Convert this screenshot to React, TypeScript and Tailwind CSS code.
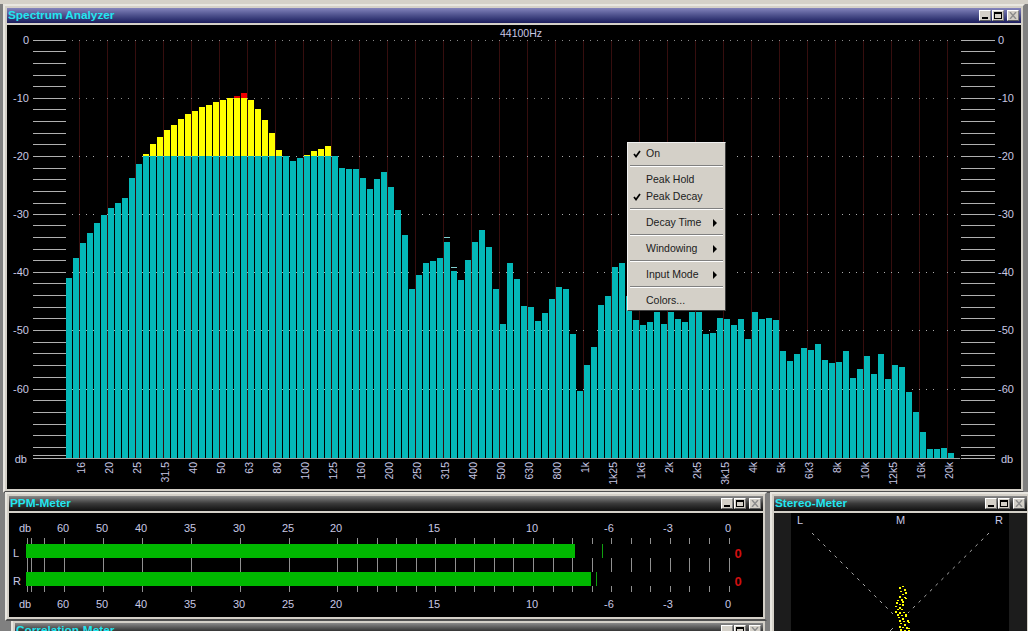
import React from 'react';

// top y of each spectrum bar, 66 + 7 * i on the x axis
const bars = [
  278, 258, 243, 233, 223, 215, 208, 203, 198, 178, 164, 156, 156, 156, 156, 156, 156, 156, 156, 156,
  156, 156, 156, 156, 156, 156, 156, 156, 156, 156, 156, 156, 161, 158, 156, 156, 156, 156, 156, 168,
  169, 169, 178, 189, 179, 172, 187, 210, 235, 289, 275, 263, 261, 258, 242, 271, 280, 260, 242, 230,
  247, 289, 324, 263, 279, 306, 307, 321, 313, 299, 287, 289, 334, 391, 365, 347, 305, 296, 267, 263,
  296, 320, 325, 322, 312, 324, 312, 319, 322, 312, 312, 334, 333, 318, 319, 325, 319, 339, 312,
  319, 318, 320, 351, 361, 354, 348, 350, 344, 360, 363, 362, 351, 378, 369, 356, 374, 354, 379, 365,
  367, 392, 412, 432, 449, 449, 448, 453,
];

const yellow: Record<number, number> = {
  11: 154, 12: 144, 13: 137, 14: 130, 15: 125, 16: 119, 17: 114, 18: 111, 19: 107, 20: 105, 21: 102, 22: 100,
  23: 98, 24: 98, 25: 98, 26: 100, 27: 109, 28: 120, 29: 133, 30: 150, 34: 155, 35: 151, 36: 149, 37: 146,
};

const freqLabels = [
  '16', '20', '25', '31.5', '40', '50', '63', '80', '100', '125', '160', '200', '250', '315', '400', '500',
  '630', '800', '1k', '1k25', '1k6', '2k', '2k5', '3k15', '4k', '5k', '6k3', '8k', '10k', '12k5', '16k', '20k',
];

const dbLabels = [
  { y: 40, t: '0' }, { y: 98, t: '-10' }, { y: 156, t: '-20' }, { y: 214, t: '-30' },
  { y: 272, t: '-40' }, { y: 330, t: '-50' }, { y: 389, t: '-60' }, { y: 459, t: 'db' },
];
const ticks = [40, 51, 63, 75, 86, 98, 109, 121, 133, 144, 156, 168, 179, 191, 203, 214, 225, 237, 249, 260, 272, 283, 295, 307, 318, 330, 342, 353, 365, 377, 389, 400, 412, 424, 435, 447, 455, 458];

const ppmLabels = [
  { x: 25, t: 'db' }, { x: 63, t: '60' }, { x: 102, t: '50' }, { x: 141, t: '40' }, { x: 190, t: '35' },
  { x: 239, t: '30' }, { x: 288, t: '25' }, { x: 336, t: '20' }, { x: 434, t: '15' }, { x: 532, t: '10' },
  { x: 609, t: '-6' }, { x: 668, t: '-3' }, { x: 728, t: '0' },
];
const ppmTicks = [27, 31, 44, 64, 103, 142, 191, 240, 289, 337, 357, 377, 396, 416, 435, 455, 474, 494, 513, 533, 553, 572, 592, 611, 631, 650, 670, 689, 709, 729];

const stereoDots = [
  [899, 587], [902, 586], [904, 589], [900, 591], [905, 592], [902, 594], [899, 596], [904, 597], [901, 599],
  [897, 600], [902, 601], [905, 598], [896, 602], [899, 604], [902, 604], [895, 606], [899, 607], [897, 609],
  [895, 611], [901, 609], [899, 612], [903, 612], [897, 614], [901, 615], [905, 614], [898, 617], [902, 618],
  [905, 616], [899, 620], [903, 621], [907, 620], [900, 623], [904, 624], [908, 622], [899, 626], [902, 627],
  [906, 627], [908, 628], [900, 629], [904, 630], [908, 630],
];

function WinButtons() {
  const btn = 'w-[12px] h-[11px] bg-[#d4d0c8] border border-t-white border-l-white border-r-[#808080] border-b-[#606060] flex items-center justify-center';
  return (
    <div className="flex gap-[1px] items-center">
      <div className={btn}><div className="w-[6px] h-[2px] bg-black mt-[5px] mr-[1px]" /></div>
      <div className={btn + ' mr-[2px]'}><div className="w-[8px] h-[7px] border border-black border-t-2" /></div>
      <div className={btn}>
        <svg width="8" height="7" viewBox="0 0 8 7" stroke="#8c8c8c" strokeWidth="1.4">
          <path d="M1 0 L7 7 M7 0 L1 7" />
        </svg>
      </div>
    </div>
  );
}

function Window({ left, top, width, height, title, active, children }: {
  left: number; top: number; width: number; height: number; title: string; active?: boolean; children?: React.ReactNode;
}) {
  return (
    <div
      className="absolute flex flex-col bg-[#d4d0c8] border-2 border-t-[#e8e6e0] border-l-[#e8e6e0] border-r-[#808080] border-b-[#505050] p-[2px]"
      style={{ left, top, width, height }}
    >
      <div
        className={
          'h-[15px] shrink-0 flex items-center justify-between pl-[1px] pr-[2px] bg-gradient-to-b ' +
          (active ? 'from-[#8484bc] to-[#1c1c5c]' : 'from-[#8a8a8a] via-[#3a3a3a] to-[#101010]')
        }
      >
        <span className="text-[11.8px] font-bold text-[#22e6f0] leading-none whitespace-nowrap">{title}</span>
        <WinButtons />
      </div>
      <div className="h-[2px] shrink-0" />
      <div className="relative flex-1 bg-black overflow-hidden">{children}</div>
    </div>
  );
}

function MenuItem({ label, checked, arrow }: { label: string; checked?: boolean; arrow?: boolean }) {
  return (
    <div className="relative h-[17px] flex items-center pl-[18px] pr-[8px] text-[10.5px] text-[#202020]">
      {checked && (
        <svg className="absolute left-[5px] top-[5px]" width="8" height="8" viewBox="0 0 8 8" fill="none" stroke="#000" strokeWidth="1.7">
          <path d="M1 4 L3 6.5 L7 1" />
        </svg>
      )}
      <span className="flex-1">{label}</span>
      {arrow && <div className="w-0 h-0 border-y-[4px] border-y-transparent border-l-[4px] border-l-black" />}
    </div>
  );
}

function MenuSep() {
  return <div className="mx-[2px] mt-[3px] mb-[4px] h-[2px] border-t border-t-[#808080] border-b border-b-white" />;
}

function ContextMenu() {
  return (
    <div className="absolute left-[627px] top-[142px] w-[99px] h-[169px] bg-[#d4d0c8] border border-t-[#f0f0f0] border-l-[#f0f0f0] border-r-[#404040] border-b-[#404040] py-[2px]">
      <MenuItem label="On" checked />
      <MenuSep />
      <MenuItem label="Peak Hold" />
      <MenuItem label="Peak Decay" checked />
      <MenuSep />
      <MenuItem label="Decay Time" arrow />
      <MenuSep />
      <MenuItem label="Windowing" arrow />
      <MenuSep />
      <MenuItem label="Input Mode" arrow />
      <MenuSep />
      <MenuItem label="Colors..." />
    </div>
  );
}

// chart drawing uses page coordinates through the viewBox
function SpectrumChart() {
  const gridY = [40, 98, 156, 214, 272, 330, 389];
  const gridX = Array.from({ length: 32 }, (_, i) => 79 + i * 28);
  const label = '#c8c8e4';
  return (
    <svg className="block" width="1014" height="465" viewBox="7 25 1014 465" fontFamily="'Liberation Sans', sans-serif" fontSize="10.5">
      {gridX.map((x) => <line key={x} x1={x + 0.5} x2={x + 0.5} y1="40" y2="458" stroke="#360e0e" />)}
      {gridY.map((y, i) => (
        <line key={y} x1="72" x2="955" y1={y + 0.5} y2={y + 0.5} stroke="#8a8a8a" strokeDasharray={i === 0 ? '1 6' : '1 6 1 6 1 6 1 13'} />
      ))}
      {ticks.map((y) => (
        <g key={y} stroke="#b0b0b0">
          <line x1="33" x2="66" y1={y + 0.5} y2={y + 0.5} />
          <line x1="961" x2="995" y1={y + 0.5} y2={y + 0.5} />
        </g>
      ))}
      <line x1="66" x2="960" y1="458.5" y2="458.5" stroke="#a0a0a0" />
      {bars.map((top, i) => (
        <rect key={i} x={66 + i * 7} y={top} width="6" height={458 - top} fill="#04b8b8" />
      ))}
      {Object.entries(yellow).map(([i, top]) => (
        <rect key={i} x={66 + Number(i) * 7} y={top} width="6" height={156 - top} fill="#ffff00" />
      ))}
      <rect x="234" y="96" width="6" height="2" fill="#e00000" />
      <rect x="241" y="93" width="6" height="5" fill="#f00000" />
      <rect x="444" y="237" width="6" height="1" fill="#80d0d0" />
      <rect x="451" y="267" width="6" height="1" fill="#80d0d0" />
      {gridY.slice(2).map((y) => (
        <line key={y} x1="72" x2="955" y1={y + 0.5} y2={y + 0.5} stroke="#ffffff" strokeOpacity="0.3" strokeDasharray="1 6 1 6 1 6 1 13" />
      ))}
      {dbLabels.map((d) => (
        <g key={d.t} fill={label} fontSize="11">
          <text x={d.t === 'db' ? 27 : 29} y={d.y + 4} textAnchor="end">{d.t}</text>
          <text x={d.t === 'db' ? 1001 : 998} y={d.y + 4}>{d.t}</text>
        </g>
      ))}
      {freqLabels.map((t, i) => {
        const x = 85 + i * 28;
        return (
          <text key={t} transform={`translate(${x} 462) rotate(-90)`} textAnchor="end" fill={label}>{t}</text>
        );
      })}
      <text x="521" y="37" textAnchor="middle" fill={label}>44100Hz</text>
    </svg>
  );
}

function PpmChart() {
  const label = '#c8c8e4';
  return (
    <svg className="block" width="754" height="105" viewBox="9 513 754 105" fontFamily="'Liberation Sans', sans-serif" fontSize="11">
      {ppmTicks.map((x) => (
        <g key={x} stroke="#909090">
          <line x1={x + 0.5} x2={x + 0.5} y1="538" y2="544" />
          <line x1={x + 0.5} x2={x + 0.5} y1="558" y2="572" />
          <line x1={x + 0.5} x2={x + 0.5} y1="586" y2="592" />
        </g>
      ))}
      <rect x="26" y="544" width="549" height="14" fill="#00b800" />
      <rect x="26" y="572" width="565" height="14" fill="#00b800" />
      <rect x="602" y="544" width="1" height="14" fill="#10a010" />
      <rect x="596" y="572" width="1" height="14" fill="#10a010" />
      {ppmLabels.map((p) => (
        <g key={p.x} fill={label} textAnchor="middle">
          <text x={p.x} y="532">{p.t}</text>
          <text x={p.x} y="608">{p.t}</text>
        </g>
      ))}
      <g fill={label}>
        <text x="13" y="557">L</text>
        <text x="13" y="585">R</text>
      </g>
      <g fill="#d01010" fontSize="13" fontWeight="bold" textAnchor="middle">
        <text x="738" y="558">0</text>
        <text x="738" y="586">0</text>
      </g>
    </svg>
  );
}

function StereoChart() {
  return (
    <svg className="block" width="253" height="118" viewBox="774 513 253 118" fontFamily="'Liberation Sans', sans-serif" fontSize="11">
      <rect x="774" y="513" width="17" height="118" fill="#1c1c1c" />
      <rect x="1009" y="513" width="18" height="118" fill="#1c1c1c" />
      <line x1="812" y1="533" x2="893" y2="614" stroke="#a8a8a8" strokeDasharray="3 5" />
      <line x1="989" y1="533" x2="908" y2="613" stroke="#a8a8a8" strokeDasharray="3 5" />
      <line x1="893" y1="628" x2="890" y2="631" stroke="#a8a8a8" />
      <g fill="#c8c8e4">
        <text x="797" y="524">L</text>
        <text x="896" y="524">M</text>
        <text x="995" y="524">R</text>
      </g>
      {stereoDots.map(([x, y], i) => <rect key={i} x={x} y={y} width="2" height={i % 2 ? 1 : 2} fill="#ffff00" />)}
    </svg>
  );
}

export default function App() {
  return (
    <div className="relative w-[1028px] h-[631px] overflow-hidden bg-[#808080] font-['Liberation_Sans',sans-serif]">
      <div className="absolute left-0 top-0 w-full h-[4px] bg-[#d4d0c8]" />
      <Window left={3} top={4} width={1022} height={489} title="Spectrum Analyzer" active>
        <SpectrumChart />
      </Window>
      <Window left={11} top={619} width={756} height={40} title="Correlation-Meter" />
      <Window left={5} top={492} width={762} height={129} title="PPM-Meter">
        <PpmChart />
      </Window>
      <Window left={770} top={492} width={261} height={150} title="Stereo-Meter">
        <StereoChart />
      </Window>
      <ContextMenu />
    </div>
  );
}
